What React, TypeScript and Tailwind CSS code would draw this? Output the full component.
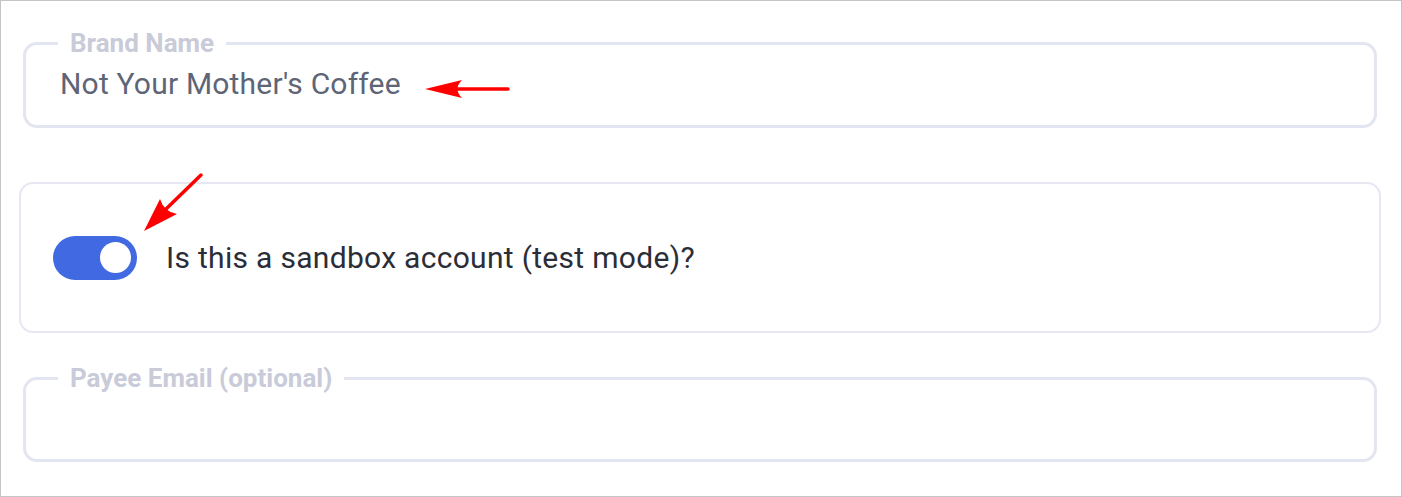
export default function App() {
  return (
    <div className="relative w-[1402px] h-[497px] border border-[#c4c4c4] bg-white font-['Roboto','Liberation_Sans',sans-serif]">
      <div className="pl-[18px] pr-[20px] pt-[27px]">
        {/* brand name field */}
        <fieldset className="mx-[4px] border-[3px] border-[#e3e5f0] rounded-[14px]">
          <legend className="ml-[32px] px-[12px] text-[26px] leading-[30px] font-bold text-[#c9cbd8]">
            Brand Name
          </legend>
          <div className="pl-[34px] pt-[8px] pb-[23px] text-[30px] leading-[36px] tracking-[0.2px] text-[#5e6577]">
            Not Your Mother's Coffee
          </div>
        </fieldset>

        {/* sandbox toggle */}
        <div className="mt-[54px] h-[151px] border-2 border-[#e6e7f2] rounded-[14px] flex items-center pl-[32px]">
          <div className="w-[84px] h-[44px] rounded-full bg-[#4169e1] flex items-center justify-end pr-[6px]">
            <div className="w-[31px] h-[31px] rounded-full bg-white" />
          </div>
          <span className="ml-[29px] text-[30px] leading-[36px] tracking-[0.3px] text-[#2b2e38]">
            Is this a sandbox account (test mode)?
          </span>
        </div>

        {/* payee email field */}
        <fieldset className="mt-[30px] mx-[4px] border-[3px] border-[#e3e5f0] rounded-[14px]">
          <legend className="ml-[32px] px-[12px] text-[26px] leading-[30px] font-bold text-[#c9cbd8]">
            Payee Email (optional)
          </legend>
          <div className="h-[66px]" />
        </fieldset>
      </div>

      {/* annotation arrows */}
      <svg className="absolute left-0 top-0 pointer-events-none" width="1402" height="497">
        <line x1="452" y1="88" x2="507" y2="88" stroke="#ff0000" strokeWidth="3.5" strokeLinecap="round" />
        <path d="M424 88 L461 79 Q452 88 461 97 Z" fill="#ff0000" />
        <line x1="164" y1="209" x2="200" y2="174" stroke="#ff0000" strokeWidth="3.5" strokeLinecap="round" />
        <path d="M143 230 L159 198 Q163 211 176 213 Z" fill="#ff0000" />
      </svg>
    </div>
  )
}
